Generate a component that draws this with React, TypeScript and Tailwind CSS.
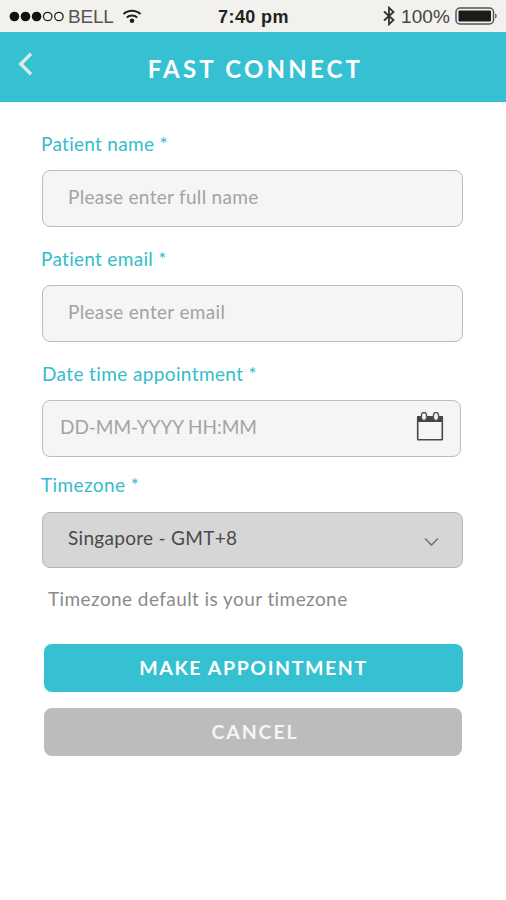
import { useState } from "react";

interface FieldLabelProps {
  htmlFor: string;
  className: string;
  children: string;
}

function FieldLabel({ htmlFor, className, children }: FieldLabelProps) {
  return (
    <label
      htmlFor={htmlFor}
      className={`block h-6 w-max whitespace-nowrap text-[19px] leading-[23px] text-[#35bccb] ${className}`}
    >
      {children}
    </label>
  );
}

function StatusBar() {
  return (
    <div className="grid h-8 grid-cols-3 items-center bg-[#f2f1ee] pl-[9px] pr-[8px] font-['Liberation_Sans',Arial,sans-serif] text-[#222]">
      <div className="flex items-center">
        <svg width="56" height="12" viewBox="0 0 56 12" className="shrink-0">
          <g fill="#111">
            <circle cx="5.4" cy="6.5" r="4.8" />
            <circle cx="16.5" cy="6.5" r="4.8" />
            <circle cx="27.6" cy="6.5" r="4.8" />
          </g>
          <g fill="none" stroke="#222" strokeWidth="1.3">
            <circle cx="38.7" cy="6.5" r="4.2" />
            <circle cx="49.9" cy="6.5" r="4.2" />
          </g>
        </svg>
        <span className="ml-[3px] pt-px text-[19px] leading-6 tracking-[-0.2px] text-[#555]">
          BELL
        </span>
        <svg
          width="20"
          height="15"
          viewBox="0 0 20 15"
          fill="none"
          stroke="#222"
          strokeWidth="2"
          className="ml-[8px] shrink-0"
        >
          <path d="M1.500 5C6.200.5 13.800.5 18.500 5M4.800 8.500c2.800-2.700 7.600-2.700 10.400 0" />
          <circle cx="10" cy="11.700" r="2.300" fill="#222" stroke="none" />
        </svg>
      </div>
      <div className="pt-px text-center text-[18px] font-bold leading-6 tracking-[0.4px]">
        7:40 pm
      </div>
      <div className="flex items-center justify-end">
        <svg
          width="12"
          height="20"
          viewBox="0 0 12 20"
          fill="none"
          stroke="#333"
          strokeWidth="1.8"
          className="shrink-0"
        >
          <path d="M1 5.500 10.500 14 6 18.300V1.700L10.500 6 1 14.500" />
        </svg>
        <span className="ml-[6px] pt-px text-[19px] leading-6 tracking-[0.1px] text-[#444]">
          100%
        </span>
        <svg width="43" height="18" viewBox="0 0 43 18" className="ml-[5px] shrink-0">
          <rect x="1" y="1" width="37.500" height="16" rx="4" fill="none" stroke="#555" strokeWidth="1.500" />
          <rect x="3.500" y="3.500" width="32.500" height="11" rx="1" fill="#1c1a1b" />
          <path d="M40 6.500c2.500.5 2.500 4.500 0 5Z" fill="#777" />
        </svg>
      </div>
    </div>
  );
}

export default function App() {
  const [name, setName] = useState("");
  const [email, setEmail] = useState("");
  const [dateTime, setDateTime] = useState("");

  return (
    <div className="min-h-screen w-[506px] bg-white font-[Lato,sans-serif]">
      <StatusBar />

      {/* Header */}
      <header className="grid h-[70px] grid-cols-[60px_1fr_60px] items-center bg-[#36c1d3]">
        <button type="button" aria-label="Back" className="mb-[6px] ml-[18px] w-4">
          <svg
            width="16"
            height="24"
            viewBox="0 0 16 24"
            fill="none"
            stroke="#dce9e9"
            strokeWidth="3.4"
          >
            <path d="M13 1.800 2.800 12 13 22.200" />
          </svg>
        </button>
        <h1 className="pl-[5px] pt-[3px] text-center text-[24px] font-bold leading-7 tracking-[3.2px] text-white">
          FAST CONNECT
        </h1>
      </header>

      <form onSubmit={(e) => e.preventDefault()} className="px-[42px] pt-[30px]">
        {/* Patient name */}
        <FieldLabel htmlFor="name" className="-ml-px tracking-[0.3px]">
          Patient name *
        </FieldLabel>
        <input
          id="name"
          type="text"
          value={name}
          onChange={(e) => setName(e.target.value)}
          placeholder="Please enter full name"
          className="mt-[14px] block h-[57px] w-[421px] rounded-lg border border-[#bdbdbd] bg-[#f5f5f5] px-[25px] pb-[5px] text-[19px] tracking-[0.3px] text-[#4a4a4a] outline-none placeholder:text-[#a3a3a3]"
        />

        {/* Patient email */}
        <FieldLabel htmlFor="email" className="-ml-px mt-5 tracking-[0.3px]">
          Patient email *
        </FieldLabel>
        <input
          id="email"
          type="email"
          value={email}
          onChange={(e) => setEmail(e.target.value)}
          placeholder="Please enter email"
          className="mt-[14px] block h-[57px] w-[421px] rounded-lg border border-[#bdbdbd] bg-[#f5f5f5] px-[25px] pb-[5px] text-[19px] tracking-[0.33px] text-[#4a4a4a] outline-none placeholder:text-[#a3a3a3]"
        />

        {/* Date time */}
        <FieldLabel htmlFor="datetime" className="mt-5 tracking-[0.38px]">
          Date time appointment *
        </FieldLabel>
        <div className="mt-[14px] flex h-[57px] w-[419px] items-center rounded-lg border border-[#bdbdbd] bg-[#f5f5f5] pl-[17px] pr-[16px]">
          <input
            id="datetime"
            type="text"
            value={dateTime}
            onChange={(e) => setDateTime(e.target.value)}
            placeholder="DD-MM-YYYY HH:MM"
            className="min-w-0 flex-1 bg-transparent pb-[3px] text-[19px] tracking-[-0.05px] text-[#4a4a4a] outline-none placeholder:text-[#a3a3a3]"
          />
          <svg width="28" height="30" viewBox="0 0 28 30" className="mb-1 shrink-0">
            <path d="M1 4h26v6H1z" fill="#444" />
            <rect x="1.700" y="5" width="24.600" height="22.800" rx=".5" fill="none" stroke="#4a4a4a" strokeWidth="1.600" />
            <g fill="#f5f5f5" stroke="#555" strokeWidth="1.400">
              <ellipse cx="8" cy="4.500" rx="2.600" ry="4" />
              <ellipse cx="20" cy="4.500" rx="2.600" ry="4" />
            </g>
          </svg>
        </div>

        {/* Timezone */}
        <FieldLabel htmlFor="timezone" className="-ml-px mt-[16px] mb-[15px] tracking-[0.4px]">
          Timezone *
        </FieldLabel>
        <button
          id="timezone"
          type="button"
          className="flex h-[56px] w-[421px] items-center justify-between rounded-lg border border-[#b5b5b5] bg-[#d6d6d6] pl-[25px] pr-[23px] text-[19px] tracking-[0.3px] text-[#4a4a4a]"
        >
          <span className="pb-[3px]">Singapore - GMT+8</span>
          <svg
            width="15"
            height="10"
            viewBox="0 0 15 10"
            fill="none"
            stroke="#777"
            strokeWidth="1.600"
            className="mt-[4px]"
          >
            <path d="M1 1.500 7.500 8 14 1.500" />
          </svg>
        </button>
        <p className="ml-[6px] mt-[19px] h-[25px] whitespace-nowrap text-[19px] leading-[23px] tracking-[0.42px] text-[#8a8a8a]">
          Timezone default is your timezone
        </p>

        {/* Buttons */}
        <button
          type="submit"
          className="ml-[2px] mt-[32px] block h-[48px] w-[419px] rounded-lg bg-[#35c1d2] text-[19.5px] font-bold tracking-[1.6px] text-white"
        >
          MAKE APPOINTMENT
        </button>
        <button
          type="button"
          className="ml-[2px] mt-[16px] block h-[48px] w-[418px] rounded-lg bg-[#bcbcbc] pb-px pl-[4px] text-[19.5px] font-bold tracking-[1.9px] text-[#f5f5f5]"
        >
          CANCEL
        </button>
      </form>
    </div>
  );
}
